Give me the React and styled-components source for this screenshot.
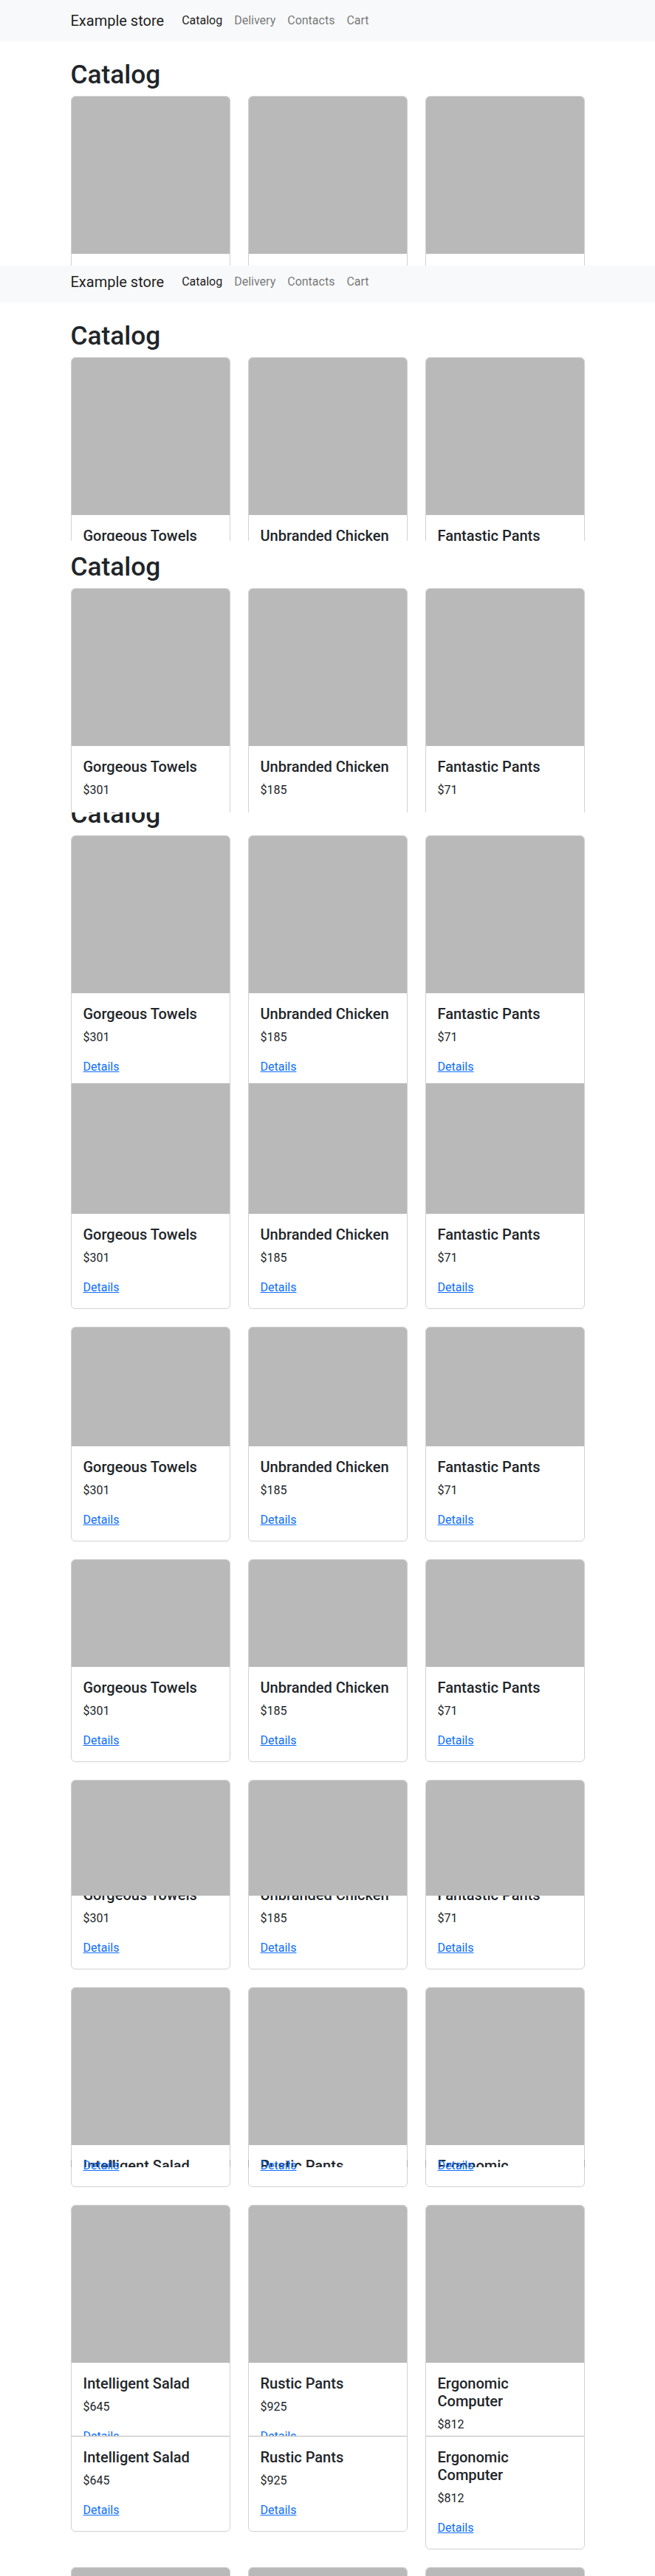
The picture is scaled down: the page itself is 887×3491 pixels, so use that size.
import React from 'react'
import styled, { createGlobalStyle } from 'styled-components'

const GlobalStyle = createGlobalStyle`
    html, body {
        margin: 0;
        padding: 0;
        background: #ffffff;
    }
    body {
        font-family: Roboto, "Liberation Sans", Arial, sans-serif;
        color: #212529;
        font-size: 16px;
        line-height: 1.5;
    }
`

const products = [
    { title: 'Gorgeous Towels', price: 301 },
    { title: 'Unbranded Chicken', price: 185 },
    { title: 'Fantastic Pants', price: 71 },
    { title: 'Intelligent Salad', price: 645 },
    { title: 'Rustic Pants', price: 925 },
    { title: 'Ergonomic Computer', price: 812 },
    { title: 'Sleek Chair', price: 120 },
    { title: 'Handmade Shoes', price: 456 },
    { title: 'Licensed Table', price: 233 },
]

// the screenshot is a stack of captures of the same page, each one scrolled
// a bit further: height = visible strip, skip = page px hidden above it
const captures = [
    { height: 360, skip: 0 },
    { height: 373, skip: 6 },
    { height: 368, skip: 66 },
    { height: 367, skip: 99 },
    { height: 382, skip: 167 },
    { height: 330, skip: 234 },
    { height: 389, skip: 265 },
    { height: 368, skip: 373 },
    { height: 374, skip: 436, overlap: 10 },
    { height: 190, skip: 710 },
]

const Screen = styled.div`
    width: 887px;
    display: flex;
    flex-direction: column;
`

const Capture = styled.div`
    height: ${props => props.$height}px;
    margin-top: ${props => -(props.$overlap || 0)}px;
    overflow: hidden;
    flex-shrink: 0;
`

const Scroller = styled.div`
    margin-top: ${props => -props.$skip}px;
`

const Navbar = styled.nav`
    height: 56px;
    background: #f8f9fa;
`

const Container = styled.div`
    max-width: 696px;
    margin: 0 auto;
    padding: 0 12px;
`

const NavInner = styled(Container)`
    height: 56px;
    display: flex;
    align-items: center;
`

const Brand = styled.a`
    font-size: 20px;
    line-height: 30px;
    color: rgba(0, 0, 0, 0.9);
    text-decoration: none;
    margin-right: 16px;
`

const NavLinks = styled.div`
    display: flex;
`

const NavLink = styled.a`
    padding: 8px;
    font-size: 16px;
    line-height: 24px;
    text-decoration: none;
    color: ${props => props.$active ? 'rgba(0, 0, 0, 0.9)' : 'rgba(0, 0, 0, 0.55)'};
`

const Main = styled(Container)`
    padding-top: 24px;
    padding-bottom: 48px;
`

const Heading = styled.h1`
    margin: 0 0 8px;
    font-size: 35.3px;
    font-weight: 500;
    line-height: 1.2;
    color: #212529;
`

const Grid = styled.div`
    display: grid;
    grid-template-columns: repeat(3, 216px);
    column-gap: 24px;
    row-gap: 24px;
    align-items: start;
`

const Card = styled.div`
    border: 1px solid rgba(0, 0, 0, 0.175);
    border-radius: 6px;
    overflow: hidden;
`

const CardImage = styled.div`
    height: 213px;
    background: #b9b9b9;
`

const CardBody = styled.div`
    padding: 16px;
`

const CardTitle = styled.h5`
    margin: 0 0 8px;
    font-size: 20px;
    font-weight: 500;
    line-height: 1.2;
    color: #212529;
`

const Price = styled.p`
    margin: 0 0 16px;
    font-size: 16px;
    line-height: 24px;
`

const Details = styled.a`
    display: inline-block;
    font-size: 16px;
    line-height: 24px;
    color: #0d6efd;
    text-decoration: underline;
`

const ProductCard = ({ title, price }) => (
    <Card>
        <CardImage />
        <CardBody>
            <CardTitle>{title}</CardTitle>
            <Price>${price}</Price>
            <Details href="#">Details</Details>
        </CardBody>
    </Card>
)

const StorePage = () => (
    <div>
        <Navbar>
            <NavInner>
                <Brand href="#">Example store</Brand>
                <NavLinks>
                    <NavLink href="#" $active>Catalog</NavLink>
                    <NavLink href="#">Delivery</NavLink>
                    <NavLink href="#">Contacts</NavLink>
                    <NavLink href="#">Cart</NavLink>
                </NavLinks>
            </NavInner>
        </Navbar>
        <Main>
            <Heading>Catalog</Heading>
            <Grid>
                {products.map(p => <ProductCard key={p.title} {...p} />)}
            </Grid>
        </Main>
    </div>
)

const App = () => (
    <>
        <GlobalStyle />
        <Screen>
            {captures.map((c, i) => (
                <Capture key={i} $height={c.height} $overlap={c.overlap}>
                    <Scroller $skip={c.skip}>
                        <StorePage />
                    </Scroller>
                </Capture>
            ))}
        </Screen>
    </>
)

export default App
